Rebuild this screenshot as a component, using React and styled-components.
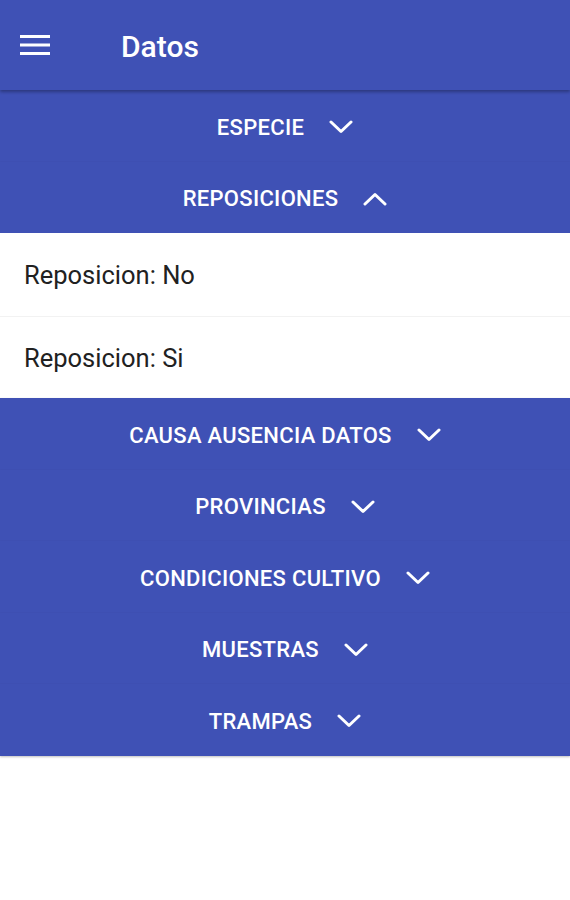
import React from "react";
import styled, { createGlobalStyle } from "styled-components";

const GlobalStyle = createGlobalStyle`
  html, body {
    margin: 0;
    padding: 0;
    background: #ffffff;
    font-family: Roboto, "Noto Sans", sans-serif;
  }
`;

const BLUE = "#3f51b5";

const sections = [
  { title: "Especie", open: false },
  {
    title: "Reposiciones",
    open: true,
    items: ["Reposicion: No", "Reposicion: Si"],
  },
  { title: "Causa ausencia datos", open: false },
  { title: "Provincias", open: false },
  { title: "Condiciones cultivo", open: false },
  { title: "Muestras", open: false },
  { title: "Trampas", open: false },
];

const Chevron = ({ up }) => (
  <ChevronSvg viewBox="0 0 24 14" $up={up}>
    <path
      d="M2 2 L12 11.5 L22 2"
      fill="none"
      stroke="#fff"
      strokeWidth="3"
      strokeLinecap="round"
      strokeLinejoin="round"
    />
  </ChevronSvg>
);

const MenuIcon = () => (
  <svg width="30" height="22" viewBox="0 0 30 22">
    <rect x="0" y="1" width="30" height="3" fill="#fff" />
    <rect x="0" y="9.5" width="30" height="3" fill="#fff" />
    <rect x="0" y="18" width="30" height="3" fill="#fff" />
  </svg>
);

const App = () => {
  return (
    <>
      <GlobalStyle />
      <Page>
        <AppBar>
          <MenuIcon />
          <Title>Datos</Title>
        </AppBar>
        {sections.map((section) => (
          <Section key={section.title}>
            <Header>
              <HeaderText>{section.title}</HeaderText>
              <Chevron up={section.open} />
            </Header>
            {section.open && (
              <List>
                {section.items.map((item) => (
                  <Item key={item}>{item}</Item>
                ))}
              </List>
            )}
          </Section>
        ))}
      </Page>
    </>
  );
};

export default App;

const Page = styled.div`
  width: 570px;
  min-height: 900px;
  background: #fff;
`;

const AppBar = styled.header`
  position: relative;
  z-index: 2;
  height: 90px;
  background: ${BLUE};
  display: flex;
  align-items: center;
  padding-left: 20px;
  gap: 71px;
  box-shadow: 0 2px 3px rgba(0, 0, 0, 0.3);
  box-sizing: border-box;
`;

const Title = styled.h1`
  margin: 0;
  margin-top: 2px;
  color: #fff;
  font-family: Roboto, sans-serif;
  font-weight: 500;
  font-size: 30px;
`;

const Section = styled.section`
  display: flex;
  flex-direction: column;
`;

const Header = styled.div`
  box-sizing: border-box;
  height: 71.5px;
  padding-top: 3px;
  background: ${BLUE};
  display: flex;
  align-items: center;
  justify-content: center;
  gap: 25px;
  box-shadow: 0 1px 2px rgba(0, 0, 0, 0.25);
`;

const HeaderText = styled.span`
  color: #fff;
  text-transform: uppercase;
  font-family: Roboto, sans-serif;
  font-weight: 500;
  font-size: 22px;
  letter-spacing: 0.3px;
`;

const ChevronSvg = styled.svg`
  width: 24px;
  height: 14px;
  transform: ${(p) => (p.$up ? "rotate(180deg)" : "none")};
`;

const List = styled.div`
  background: #fff;
  display: flex;
  flex-direction: column;
`;

const Item = styled.div`
  box-sizing: border-box;
  height: 82.5px;
  padding-top: 2px;
  display: flex;
  align-items: center;
  padding-left: 24px;
  font-family: Roboto, sans-serif;
  font-size: 25.5px;
  color: #212121;
  & + & {
    border-top: 1px solid #f2f2f2;
  }
`;
